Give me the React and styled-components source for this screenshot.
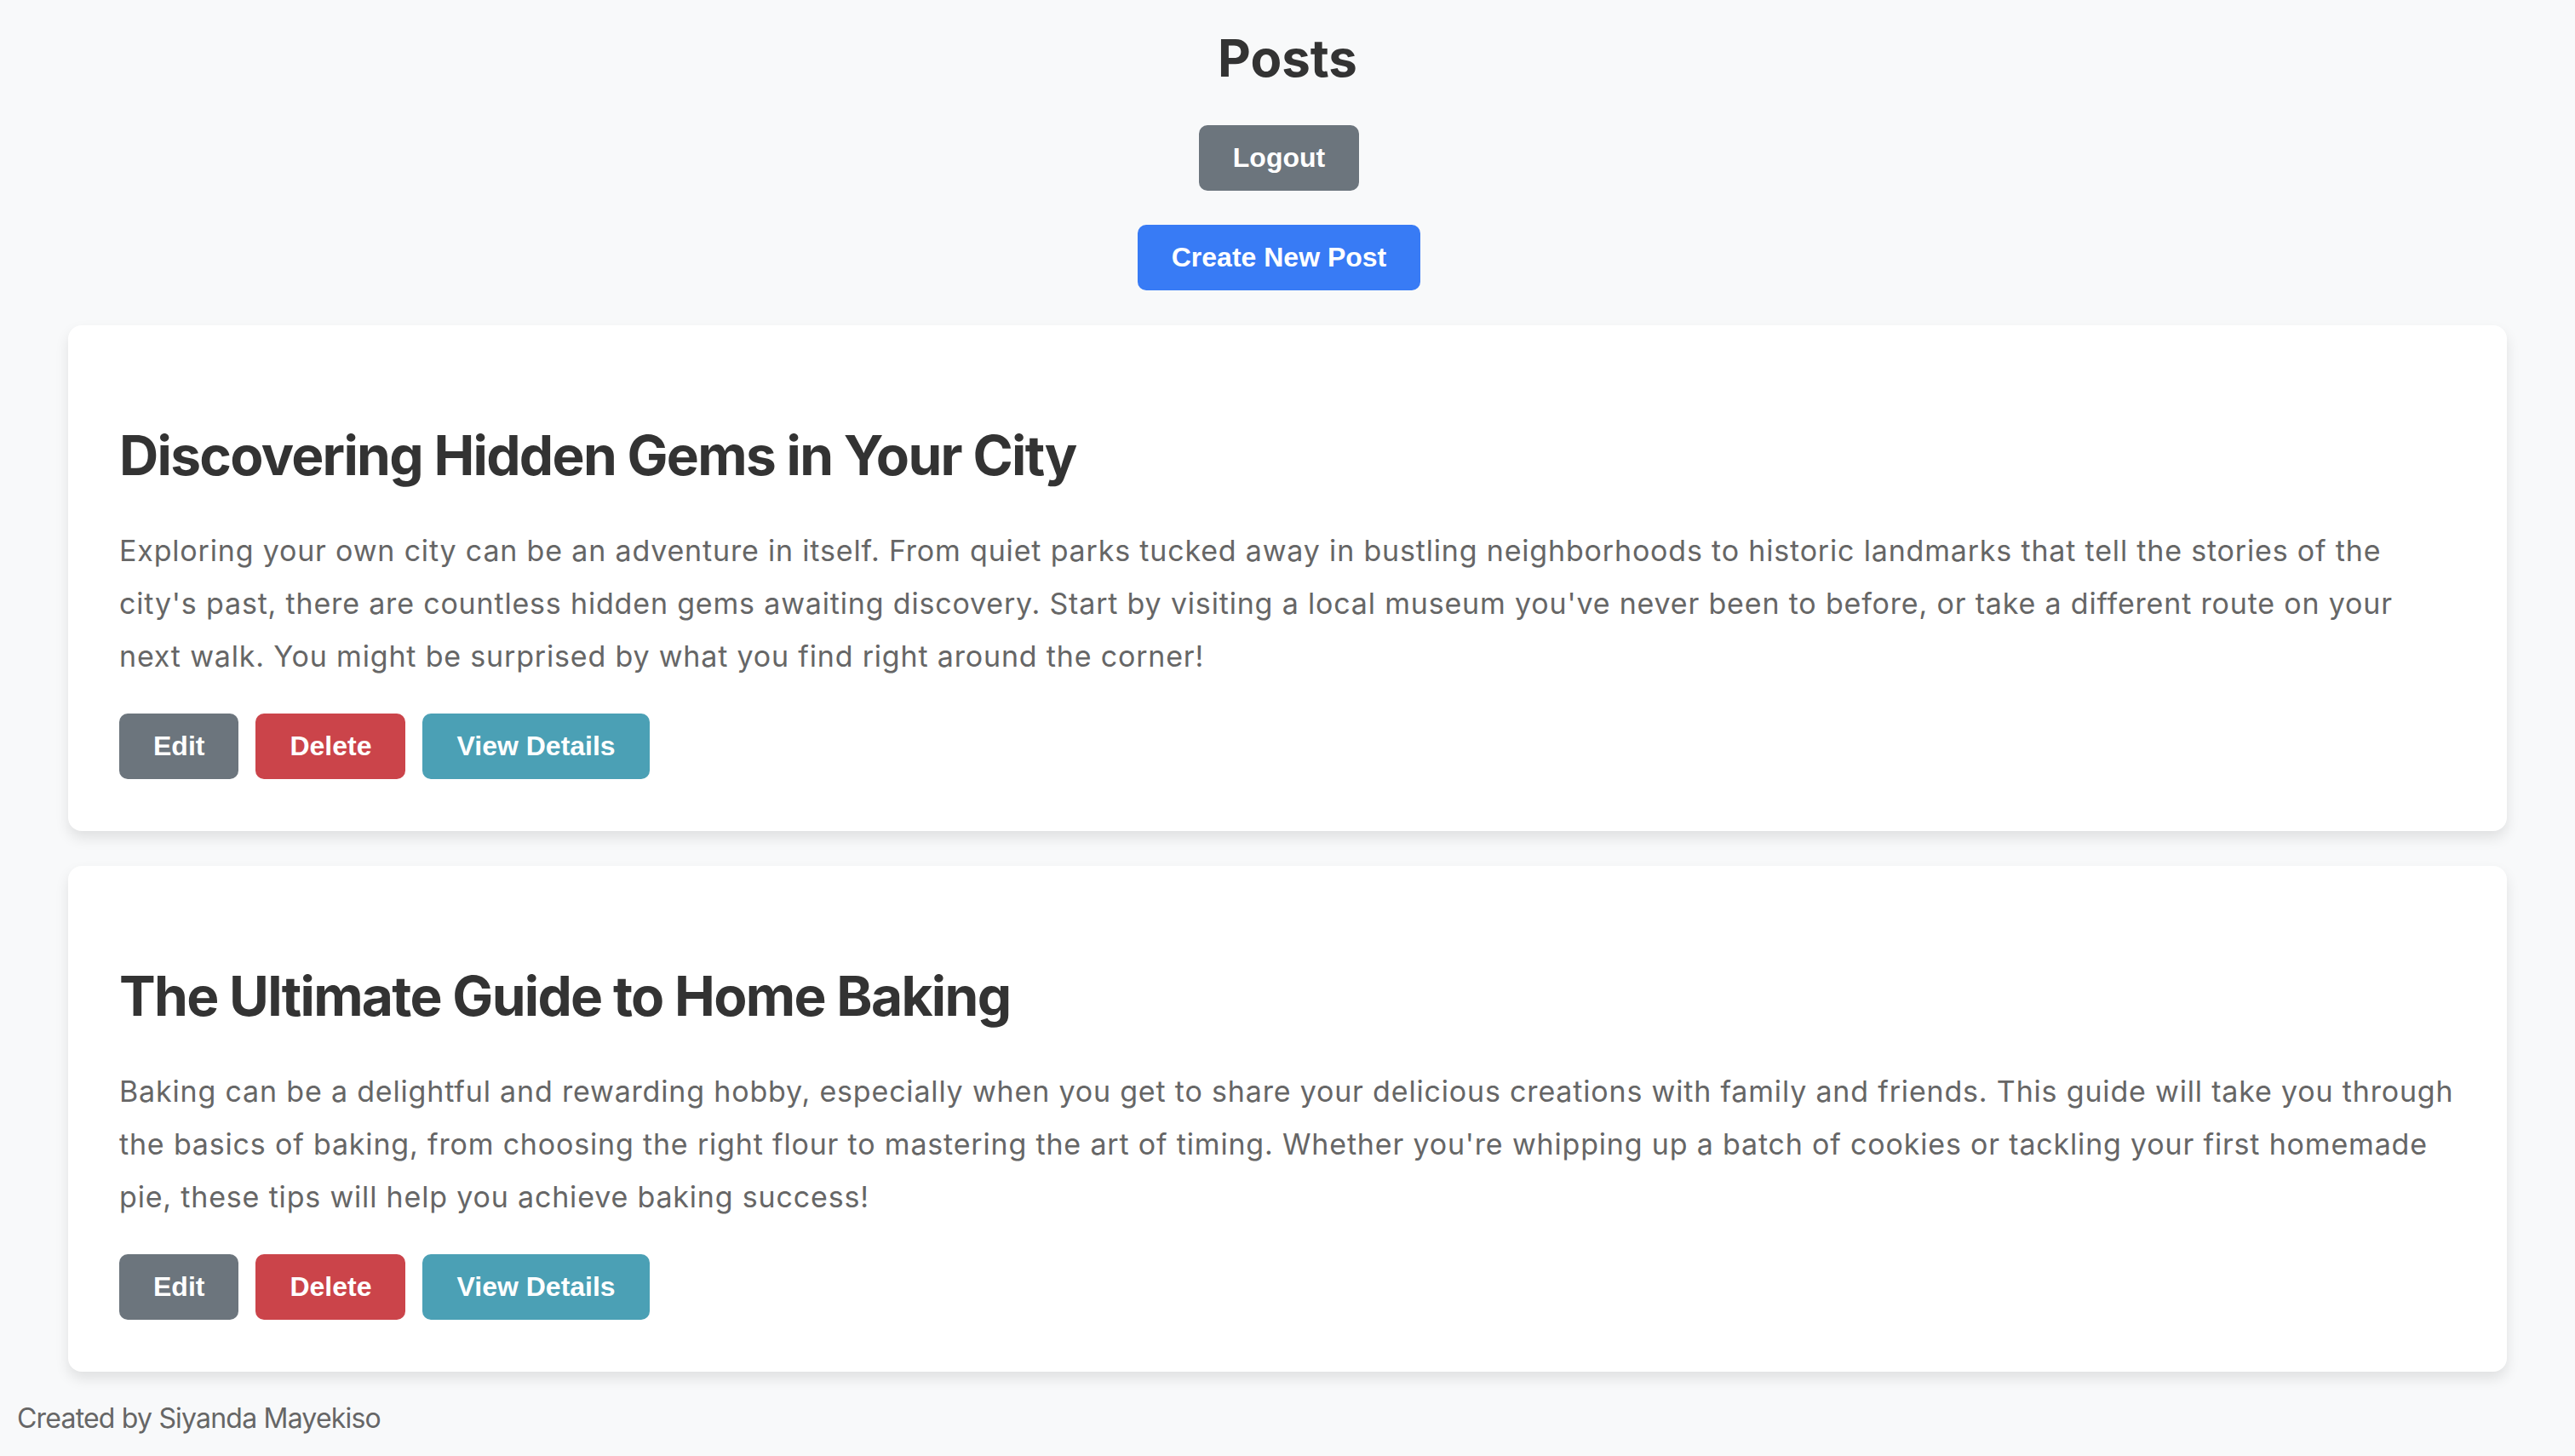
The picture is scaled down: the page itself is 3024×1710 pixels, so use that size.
import React from 'react';
import styled, { createGlobalStyle } from 'styled-components';

const GlobalStyle = createGlobalStyle`
  body {
    margin: 0;
    background-color: #f8f9fa;
    font-family: Inter, "Noto Sans", sans-serif;
    color: #333;
  }
`;

const Page = styled.div`
  display: flex;
  flex-direction: column;
  padding-top: 32px;
`;

const Header = styled.header`
  display: flex;
  flex-direction: column;
  align-items: center;
  gap: 40px;
`;

const Title = styled.h1`
  margin: 0 0 3px;
  font-size: 60px;
  font-weight: 700;
  color: #333;
`;

const colors = {
  primary: '#387bf5',
  secondary: '#6c757d',
  danger: '#cb444a',
  info: '#4ba0b5',
};

const Button = styled.button`
  border: none;
  border-radius: 10px;
  margin-right: 20px;
  padding: 20px 40px;
  font-family: "Liberation Sans", Arial, sans-serif;
  font-size: 32px;
  font-weight: 700;
  color: #fff;
  cursor: pointer;
  background-color: ${(props) => colors[props.variant] || colors.secondary};
`;

const PostList = styled.main`
  display: flex;
  flex-direction: column;
  gap: 41px;
  margin: 41px 80px 0;
`;

const Card = styled.article`
  background: #fff;
  border-radius: 16px;
  padding: 114px 60px 61px;
  box-shadow: 0 8px 16px rgba(0, 0, 0, 0.1);
`;

const PostTitle = styled.h2`
  margin: 0 0 43px;
  font-size: 64px;
  font-weight: 700;
  letter-spacing: -1.7px;
  color: #333;
`;

const PostBody = styled.p`
  margin: 0 0 36px;
  font-size: 34px;
  line-height: 62px;
  letter-spacing: 0.82px;
  color: #666;
`;

const Actions = styled.div`
  display: flex;
`;

const Footer = styled.footer`
  padding: 35px 20px 0;
  font-size: 32px;
  letter-spacing: -0.8px;
  color: #666;
`;

const posts = [
  {
    id: 1,
    title: 'Discovering Hidden Gems in Your City',
    body: "Exploring your own city can be an adventure in itself. From quiet parks tucked away in bustling neighborhoods to historic landmarks that tell the stories of the city's past, there are countless hidden gems awaiting discovery. Start by visiting a local museum you've never been to before, or take a different route on your next walk. You might be surprised by what you find right around the corner!",
  },
  {
    id: 2,
    title: 'The Ultimate Guide to Home Baking',
    body: "Baking can be a delightful and rewarding hobby, especially when you get to share your delicious creations with family and friends. This guide will take you through the basics of baking, from choosing the right flour to mastering the art of timing. Whether you're whipping up a batch of cookies or tackling your first homemade pie, these tips will help you achieve baking success!",
  },
];

function App() {
  return (
    <>
      <GlobalStyle />
      <Page>
        <Header>
          <Title>Posts</Title>
          <Button variant="secondary">Logout</Button>
          <Button variant="primary">Create New Post</Button>
        </Header>
        <PostList>
          {posts.map((post) => (
            <Card key={post.id}>
              <PostTitle>{post.title}</PostTitle>
              <PostBody>{post.body}</PostBody>
              <Actions>
                <Button variant="secondary">Edit</Button>
                <Button variant="danger">Delete</Button>
                <Button variant="info">View Details</Button>
              </Actions>
            </Card>
          ))}
        </PostList>
        <Footer>Created by Siyanda Mayekiso</Footer>
      </Page>
    </>
  );
}

export default App;
